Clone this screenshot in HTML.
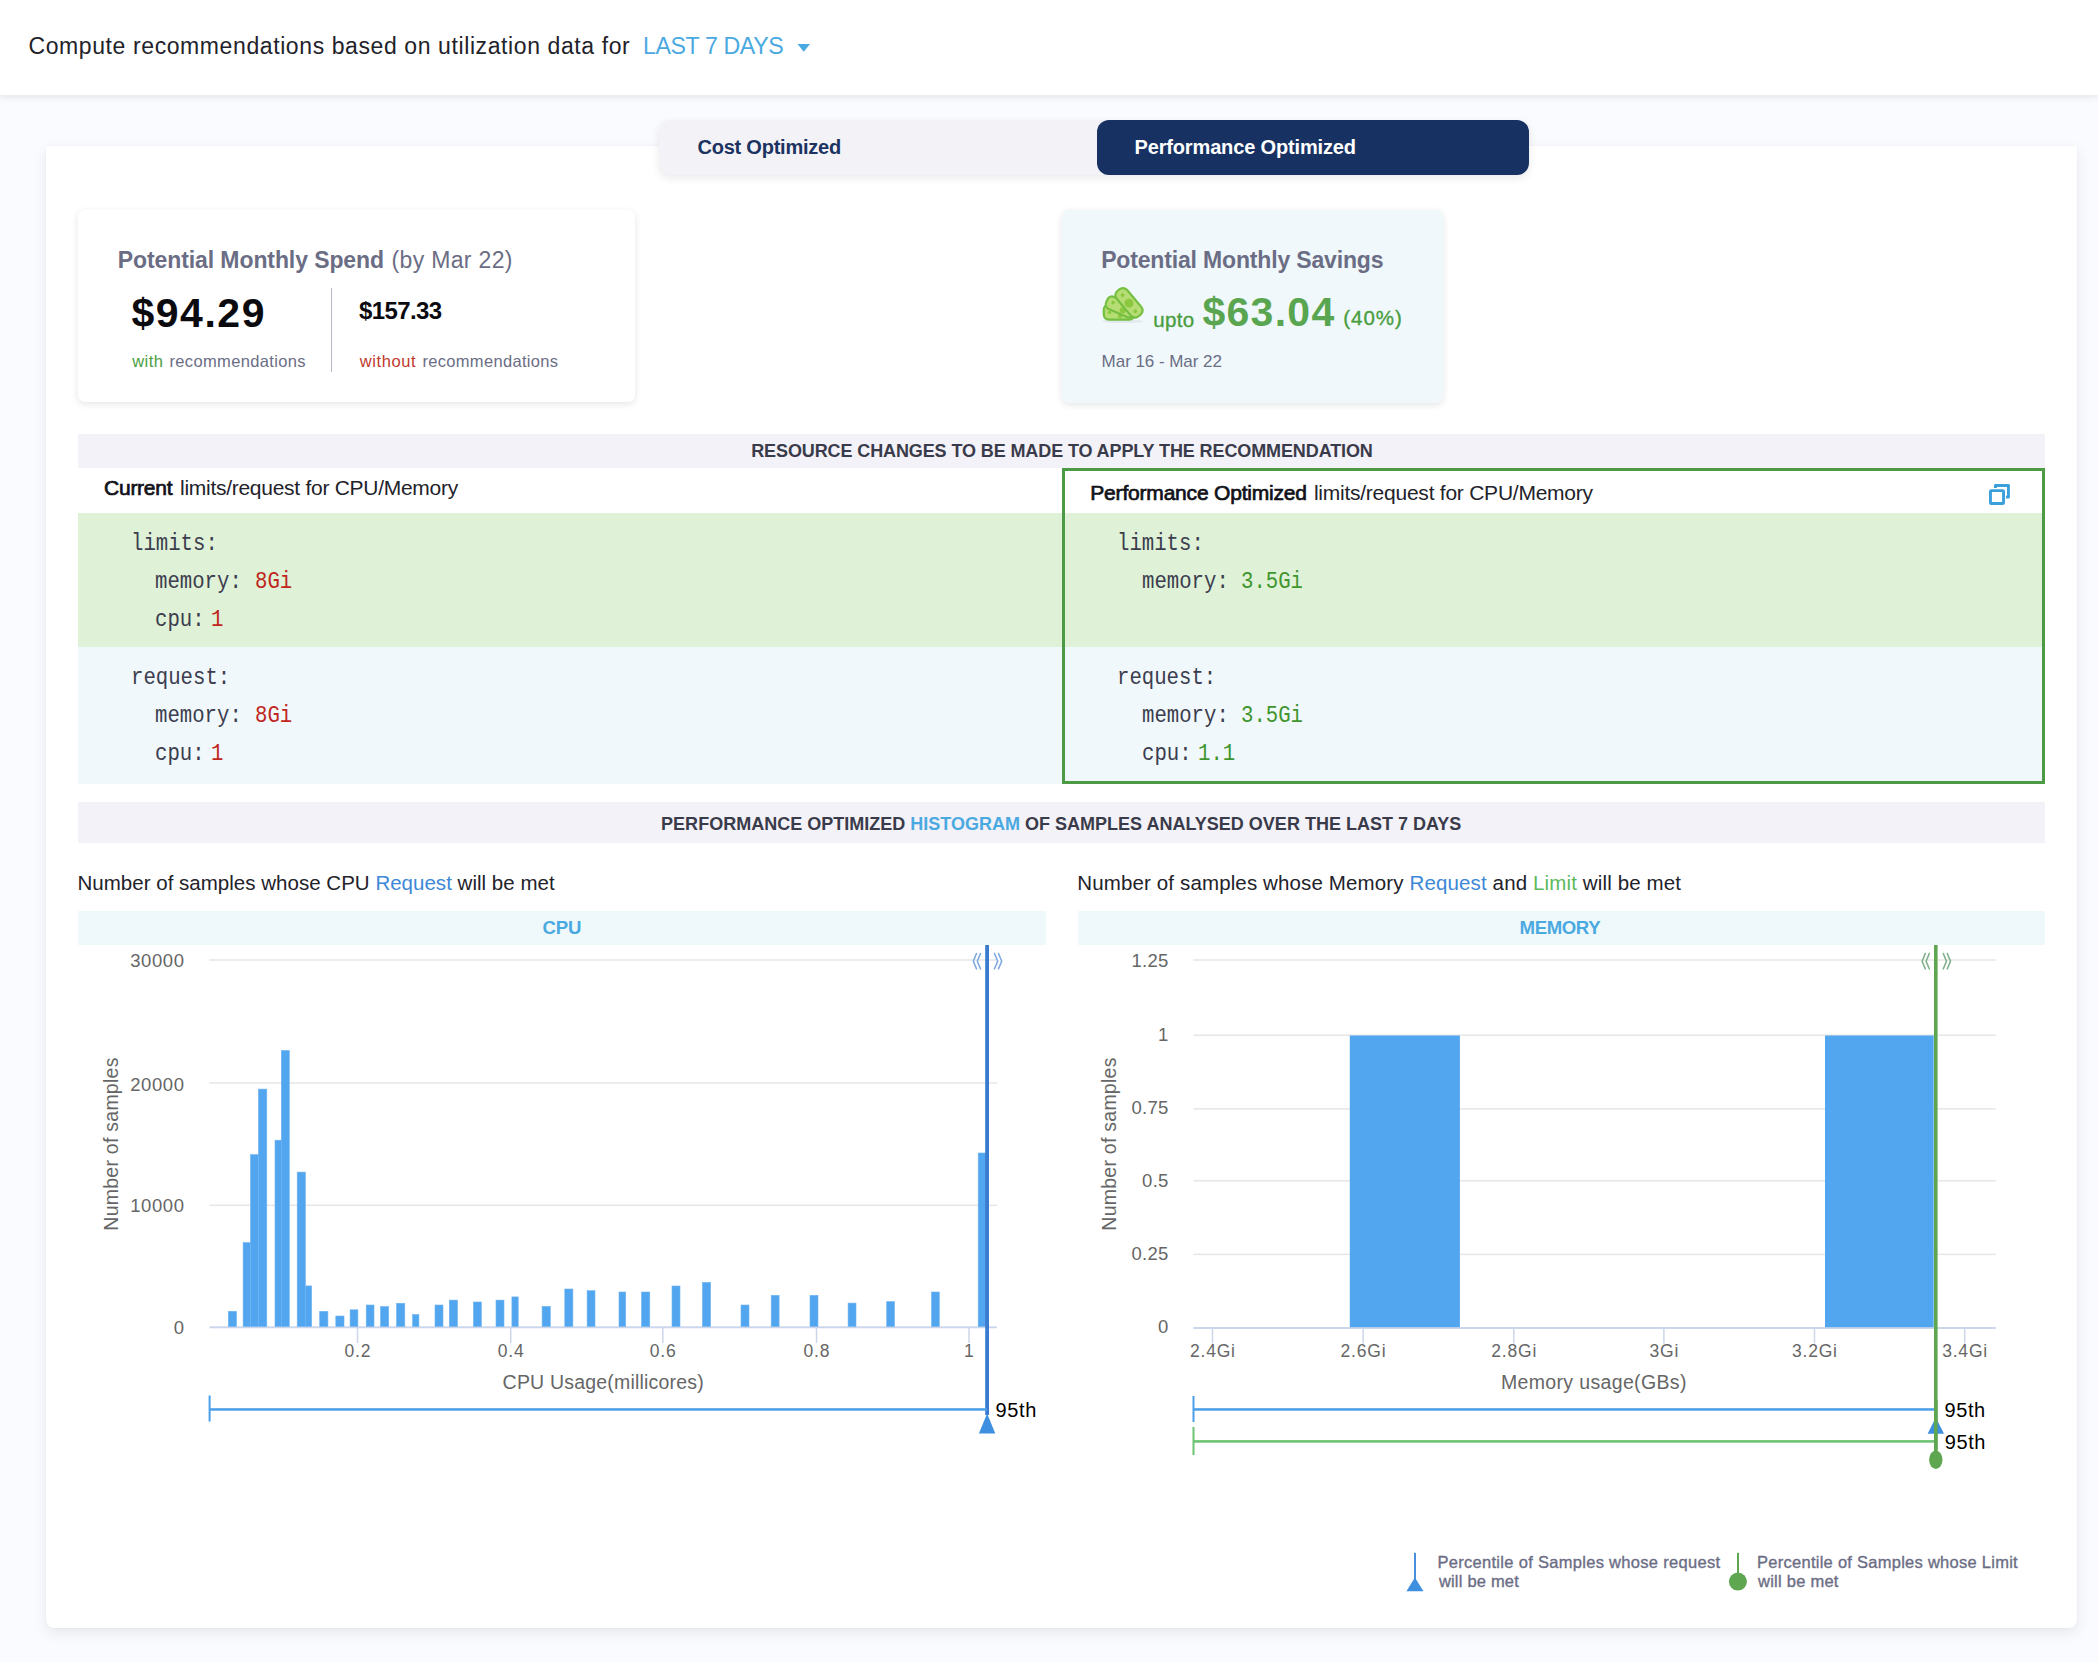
<!DOCTYPE html>
<html><head><meta charset="utf-8"><style>
html,body{margin:0;padding:0;width:2098px;height:1662px;overflow:hidden;background:#fafbfe;font-family:'Liberation Sans', sans-serif;}
.t{position:absolute;white-space:nowrap;}
</style></head><body>
<div style="position:absolute;left:0px;top:0px;width:2098px;height:95px;background:#fff;box-shadow:0 2px 7px rgba(40,41,61,0.11);z-index:2"></div>
<div id="t1" class="t" style="left:28.5px;top:34.53px;font-size:23px;line-height:23px;color:#22222a;font-weight:400;font-family:'Liberation Sans', sans-serif;letter-spacing:0.596px;z-index:3">Compute recommendations based on utilization data for</div>
<div id="t2" class="t" style="left:642.9px;top:34.56px;font-size:23.2px;line-height:23.2px;color:#4ba9e1;font-weight:400;font-family:'Liberation Sans', sans-serif;letter-spacing:-0.400px;z-index:3">LAST 7 DAYS</div>
<svg style="position:absolute;left:796px;top:42px;z-index:3" width="16" height="12" viewBox="0 0 16 12"><path d="M1.5 2 L14 2 L7.75 9.8 Z" fill="#4ba9e1"/></svg>
<div style="position:absolute;left:46px;top:145.5px;width:2031px;height:1482.5px;background:#fff;border-radius:0 0 8px 8px;box-shadow:0 5px 14px rgba(40,41,61,0.09), 0 0 2px rgba(40,41,61,0.05)"></div>
<div style="position:absolute;left:659px;top:120px;width:870px;height:55px;background:#f3f2f7;border-radius:12px;box-shadow:0 3px 8px rgba(40,41,61,0.10)"></div>
<div style="position:absolute;left:1097px;top:120px;width:432px;height:55px;background:#173262;border-radius:12px"></div>
<div id="t3" class="t" style="left:697.5px;top:137.37px;font-size:20px;line-height:20px;color:#1b3360;font-weight:700;font-family:'Liberation Sans', sans-serif;letter-spacing:-0.231px;">Cost Optimized</div>
<div id="t4" class="t" style="left:1134.5px;top:137.37px;font-size:20px;line-height:20px;color:#ffffff;font-weight:700;font-family:'Liberation Sans', sans-serif;letter-spacing:-0.150px;">Performance Optimized</div>
<div style="position:absolute;left:78px;top:210px;width:557px;height:192px;background:#fff;border-radius:7px;box-shadow:0 2px 7px rgba(40,41,61,0.12)"></div>
<div id="t5" class="t" style="left:117.8px;top:248.63px;font-size:23px;line-height:23px;color:#6b6d85;font-weight:700;font-family:'Liberation Sans', sans-serif;letter-spacing:-0.094px;">Potential Monthly Spend</div>
<div id="t6" class="t" style="left:391.5px;top:248.63px;font-size:23px;line-height:23px;color:#6b6d85;font-weight:400;font-family:'Liberation Sans', sans-serif;letter-spacing:0.340px;">(by Mar 22)</div>
<div id="t7" class="t" style="left:131.4px;top:292.89px;font-size:41px;line-height:41px;color:#0b0b0f;font-weight:700;font-family:'Liberation Sans', sans-serif;letter-spacing:1.533px;">$94.29</div>
<div id="t8" class="t" style="left:359.0px;top:298.68px;font-size:24px;line-height:24px;color:#0b0b0f;font-weight:700;font-family:'Liberation Sans', sans-serif;letter-spacing:-0.593px;">$157.33</div>
<div id="t9" class="t" style="left:132.3px;top:352.93px;font-size:16.5px;line-height:16.5px;color:#4a9e3f;font-weight:400;font-family:'Liberation Sans', sans-serif;letter-spacing:0.404px;">with</div>
<div id="t10" class="t" style="left:169.5px;top:352.93px;font-size:16.5px;line-height:16.5px;color:#6b6d85;font-weight:400;font-family:'Liberation Sans', sans-serif;letter-spacing:0.346px;">recommendations</div>
<div id="t11" class="t" style="left:359.8px;top:352.93px;font-size:16.5px;line-height:16.5px;color:#c0392b;font-weight:400;font-family:'Liberation Sans', sans-serif;letter-spacing:0.594px;">without</div>
<div id="t12" class="t" style="left:422.40000000000003px;top:352.93px;font-size:16.5px;line-height:16.5px;color:#6b6d85;font-weight:400;font-family:'Liberation Sans', sans-serif;letter-spacing:0.324px;">recommendations</div>
<div style="position:absolute;left:330.5px;top:288px;width:1.5px;height:84px;background:#b8b9c8"></div>
<div style="position:absolute;left:1062px;top:209.5px;width:381px;height:193px;background:#f0f8fc;border-radius:7px;box-shadow:0 2px 7px rgba(40,41,61,0.12)"></div>
<div id="t13" class="t" style="left:1101.2px;top:248.63px;font-size:23px;line-height:23px;color:#6b6d85;font-weight:700;font-family:'Liberation Sans', sans-serif;letter-spacing:-0.166px;">Potential Monthly Savings</div>
<div id="t14" class="t" style="left:1153.1999999999998px;top:309.64px;font-size:20.5px;line-height:20.5px;color:#4a9e3f;font-weight:400;font-family:'Liberation Sans', sans-serif;letter-spacing:0.329px;-webkit-text-stroke:0.35px currentColor">upto</div>
<div id="t15" class="t" style="left:1202.4px;top:292.39px;font-size:41px;line-height:41px;color:#5aa650;font-weight:700;font-family:'Liberation Sans', sans-serif;letter-spacing:1.289px;">$63.04</div>
<div id="t16" class="t" style="left:1343.2px;top:307.64px;font-size:20.5px;line-height:20.5px;color:#4a9e3f;font-weight:400;font-family:'Liberation Sans', sans-serif;letter-spacing:1.010px;-webkit-text-stroke:0.35px currentColor">(40%)</div>
<div id="t17" class="t" style="left:1101.6px;top:352.81px;font-size:17px;line-height:17px;color:#6b6d85;font-weight:400;font-family:'Liberation Sans', sans-serif;letter-spacing:-0.040px;">Mar 16 - Mar 22</div>
<svg style="position:absolute;left:1095px;top:280px;" width="60" height="50" viewBox="0 0 60 50">
<ellipse cx="27.5" cy="41.3" rx="20.5" ry="1.8" fill="rgba(60,60,80,0.08)"/>
<rect x="8.8" y="24.6" width="30.6" height="15" rx="5" fill="#b5dd74" stroke="#74bf40" stroke-width="2.2"/>
<circle cx="14.6" cy="32.5" r="1.8" fill="#8cc83f"/><circle cx="25" cy="36" r="2.2" fill="#8cc83f"/>
<g transform="translate(25.5 27) rotate(24)"><rect x="-15" y="-6.6" width="30" height="13.2" rx="5" fill="#b5dd74" stroke="#74bf40" stroke-width="2.2"/>
<circle cx="-8.5" cy="-1" r="1.8" fill="#8cc83f"/><circle cx="3.5" cy="2" r="3.2" fill="#8cc83f"/></g>
<g transform="translate(34 22.8) rotate(50)"><rect x="-16.5" y="-6.8" width="33" height="13.6" rx="5.5" fill="#b5dd74" stroke="#74bf40" stroke-width="2.2"/>
<circle cx="-10" cy="0" r="1.9" fill="#8cc83f"/><circle cx="0.3" cy="0.3" r="4.5" fill="#8cc83f"/><circle cx="10.5" cy="0.5" r="1.9" fill="#8cc83f"/></g>
</svg>
<div style="position:absolute;left:78px;top:434px;width:1967px;height:34px;background:#f3f2f8"></div>
<div id="t18" class="t" style="left:751.1999999999999px;top:442.06px;font-size:18px;line-height:18px;color:#3a3b4a;font-weight:700;font-family:'Liberation Sans', sans-serif;letter-spacing:-0.106px;">RESOURCE CHANGES TO BE MADE TO APPLY THE RECOMMENDATION</div>
<div id="t19" class="t" style="left:104.1px;top:477.12px;font-size:21px;line-height:21px;color:#111118;font-weight:400;font-family:'Liberation Sans', sans-serif;letter-spacing:-0.275px;-webkit-text-stroke:0.7px currentColor">Current</div>
<div id="t20" class="t" style="left:180.0px;top:477.12px;font-size:21px;line-height:21px;color:#22222a;font-weight:400;font-family:'Liberation Sans', sans-serif;letter-spacing:-0.274px;">limits/request for CPU/Memory</div>
<div style="position:absolute;left:78px;top:513px;width:985px;height:134px;background:#dff1d6"></div>
<div style="position:absolute;left:78px;top:647px;width:985px;height:137px;background:#f0f8fb"></div>
<div style="position:absolute;left:1062px;top:513px;width:983px;height:134px;background:#dff1d6"></div>
<div style="position:absolute;left:1062px;top:647px;width:983px;height:137px;background:#f0f8fb"></div>
<div style="position:absolute;left:1062px;top:468px;width:983px;height:316px;border:3px solid #4d9a45;box-sizing:border-box"></div>
<div id="t21" class="t" style="left:1090.3px;top:481.62px;font-size:21px;line-height:21px;color:#111118;font-weight:400;font-family:'Liberation Sans', sans-serif;letter-spacing:-0.193px;-webkit-text-stroke:0.7px currentColor">Performance Optimized</div>
<div id="t22" class="t" style="left:1313.8999999999999px;top:481.62px;font-size:21px;line-height:21px;color:#22222a;font-weight:400;font-family:'Liberation Sans', sans-serif;letter-spacing:-0.241px;">limits/request for CPU/Memory</div>
<svg style="position:absolute;left:1985px;top:480px;" width="30" height="30" viewBox="0 0 30 30"><g fill="none" stroke="#3a9fda" stroke-width="2.9" stroke-linejoin="round"><rect x="5.45" y="10.65" width="13.1" height="12.9" rx="0.8"/><path d="M10.45 7.9 V5.45 H23.45 V17.15 H21.0"/></g></svg>
<div class="t" style="left:130.50px;top:531.61px;font-size:24px;line-height:24px;color:#3c3d4e;font-family:'Liberation Mono', monospace;transform:scaleX(0.8611);transform-origin:0 0">limits:</div>
<div class="t" style="left:155.30px;top:569.61px;font-size:24px;line-height:24px;color:#3c3d4e;font-family:'Liberation Mono', monospace;transform:scaleX(0.8611);transform-origin:0 0">memory:</div>
<div class="t" style="left:254.50px;top:569.61px;font-size:24px;line-height:24px;color:#c0261d;font-family:'Liberation Mono', monospace;transform:scaleX(0.8611);transform-origin:0 0">8Gi</div>
<div class="t" style="left:155.30px;top:607.61px;font-size:24px;line-height:24px;color:#3c3d4e;font-family:'Liberation Mono', monospace;transform:scaleX(0.8611);transform-origin:0 0">cpu:</div>
<div class="t" style="left:211.10px;top:607.61px;font-size:24px;line-height:24px;color:#c0261d;font-family:'Liberation Mono', monospace;transform:scaleX(0.8611);transform-origin:0 0">1</div>
<div class="t" style="left:130.50px;top:666.01px;font-size:24px;line-height:24px;color:#3c3d4e;font-family:'Liberation Mono', monospace;transform:scaleX(0.8611);transform-origin:0 0">request:</div>
<div class="t" style="left:155.30px;top:704.01px;font-size:24px;line-height:24px;color:#3c3d4e;font-family:'Liberation Mono', monospace;transform:scaleX(0.8611);transform-origin:0 0">memory:</div>
<div class="t" style="left:254.50px;top:704.01px;font-size:24px;line-height:24px;color:#c0261d;font-family:'Liberation Mono', monospace;transform:scaleX(0.8611);transform-origin:0 0">8Gi</div>
<div class="t" style="left:155.30px;top:742.21px;font-size:24px;line-height:24px;color:#3c3d4e;font-family:'Liberation Mono', monospace;transform:scaleX(0.8611);transform-origin:0 0">cpu:</div>
<div class="t" style="left:211.10px;top:742.21px;font-size:24px;line-height:24px;color:#c0261d;font-family:'Liberation Mono', monospace;transform:scaleX(0.8611);transform-origin:0 0">1</div>
<div class="t" style="left:1117.00px;top:531.61px;font-size:24px;line-height:24px;color:#3c3d4e;font-family:'Liberation Mono', monospace;transform:scaleX(0.8611);transform-origin:0 0">limits:</div>
<div class="t" style="left:1141.80px;top:569.61px;font-size:24px;line-height:24px;color:#3c3d4e;font-family:'Liberation Mono', monospace;transform:scaleX(0.8611);transform-origin:0 0">memory:</div>
<div class="t" style="left:1241.00px;top:569.61px;font-size:24px;line-height:24px;color:#3f952e;font-family:'Liberation Mono', monospace;transform:scaleX(0.8611);transform-origin:0 0">3.5Gi</div>
<div class="t" style="left:1117.00px;top:666.01px;font-size:24px;line-height:24px;color:#3c3d4e;font-family:'Liberation Mono', monospace;transform:scaleX(0.8611);transform-origin:0 0">request:</div>
<div class="t" style="left:1141.80px;top:704.01px;font-size:24px;line-height:24px;color:#3c3d4e;font-family:'Liberation Mono', monospace;transform:scaleX(0.8611);transform-origin:0 0">memory:</div>
<div class="t" style="left:1241.00px;top:704.01px;font-size:24px;line-height:24px;color:#3f952e;font-family:'Liberation Mono', monospace;transform:scaleX(0.8611);transform-origin:0 0">3.5Gi</div>
<div class="t" style="left:1141.80px;top:742.21px;font-size:24px;line-height:24px;color:#3c3d4e;font-family:'Liberation Mono', monospace;transform:scaleX(0.8611);transform-origin:0 0">cpu:</div>
<div class="t" style="left:1197.60px;top:742.21px;font-size:24px;line-height:24px;color:#3f952e;font-family:'Liberation Mono', monospace;transform:scaleX(0.8611);transform-origin:0 0">1.1</div>
<div style="position:absolute;left:78px;top:802px;width:1967px;height:41px;background:#f3f2f8"></div>
<div id="t23" class="t" style="left:661.1px;top:815.46px;font-size:18px;line-height:18px;color:#3a3b4a;font-weight:700;font-family:'Liberation Sans', sans-serif;letter-spacing:0.007px;">PERFORMANCE OPTIMIZED <span style="color:#4ba9e1">HISTOGRAM</span> OF SAMPLES ANALYSED OVER THE LAST 7 DAYS</div>
<div id="t24" class="t" style="left:77.5px;top:872.84px;font-size:20.5px;line-height:20.5px;color:#22222a;font-weight:400;font-family:'Liberation Sans', sans-serif;letter-spacing:0.018px;">Number of samples whose CPU <span style="color:#3d88d6">Request</span> will be met</div>
<div id="t25" class="t" style="left:1077.3px;top:872.84px;font-size:20.5px;line-height:20.5px;color:#22222a;font-weight:400;font-family:'Liberation Sans', sans-serif;letter-spacing:0.132px;">Number of samples whose Memory <span style="color:#3d88d6">Request</span> and <span style="color:#5cb85c">Limit</span> will be met</div>
<div style="position:absolute;left:78px;top:911px;width:968px;height:34px;background:#eff9fc"></div>
<div style="position:absolute;left:1078px;top:911px;width:967px;height:34px;background:#eff9fc"></div>
<div id="t26" class="t" style="left:542.6px;top:918.95px;font-size:18.6px;line-height:18.6px;color:#4ba9e1;font-weight:700;font-family:'Liberation Sans', sans-serif;letter-spacing:-0.200px;">CPU</div>
<div id="t27" class="t" style="left:1519.6000000000001px;top:918.95px;font-size:18.6px;line-height:18.6px;color:#4ba9e1;font-weight:700;font-family:'Liberation Sans', sans-serif;letter-spacing:-0.400px;">MEMORY</div>
<svg style="position:absolute;left:0;top:0" width="2098" height="1662" viewBox="0 0 2098 1662"><rect x="209.4" y="959.25" width="787.5" height="1.5" fill="#e6e6e6"/><rect x="209.4" y="1082.25" width="787.5" height="1.5" fill="#e6e6e6"/><rect x="209.4" y="1204.55" width="787.5" height="1.5" fill="#e6e6e6"/><rect x="209.4" y="1326.3" width="787.5" height="2" fill="#ccd6eb"/><rect x="356.75" y="1328" width="1.5" height="15" fill="#ccd6eb"/><rect x="509.95" y="1328" width="1.5" height="15" fill="#ccd6eb"/><rect x="662.05" y="1328" width="1.5" height="15" fill="#ccd6eb"/><rect x="815.75" y="1328" width="1.5" height="15" fill="#ccd6eb"/><rect x="968.25" y="1328" width="1.5" height="15" fill="#ccd6eb"/><rect x="228.30" y="1311.30" width="8.20" height="15.20" fill="#52a5ef" stroke="#6fb4f1" stroke-width="0.6"/><rect x="243.10" y="1242.60" width="7.40" height="83.90" fill="#52a5ef" stroke="#6fb4f1" stroke-width="0.6"/><rect x="250.50" y="1154.60" width="7.90" height="171.90" fill="#52a5ef" stroke="#6fb4f1" stroke-width="0.6"/><rect x="258.40" y="1089.10" width="8.40" height="237.40" fill="#52a5ef" stroke="#6fb4f1" stroke-width="0.6"/><rect x="275.00" y="1140.20" width="6.30" height="186.30" fill="#52a5ef" stroke="#6fb4f1" stroke-width="0.6"/><rect x="281.30" y="1050.50" width="8.00" height="276.00" fill="#52a5ef" stroke="#6fb4f1" stroke-width="0.6"/><rect x="297.20" y="1172.10" width="8.20" height="154.40" fill="#52a5ef" stroke="#6fb4f1" stroke-width="0.6"/><rect x="305.40" y="1285.90" width="6.30" height="40.60" fill="#52a5ef" stroke="#6fb4f1" stroke-width="0.6"/><rect x="319.70" y="1311.30" width="8.20" height="15.20" fill="#52a5ef" stroke="#6fb4f1" stroke-width="0.6"/><rect x="335.80" y="1316.00" width="8.20" height="10.50" fill="#52a5ef" stroke="#6fb4f1" stroke-width="0.6"/><rect x="350.10" y="1309.80" width="7.80" height="16.70" fill="#52a5ef" stroke="#6fb4f1" stroke-width="0.6"/><rect x="366.20" y="1305.00" width="7.80" height="21.50" fill="#52a5ef" stroke="#6fb4f1" stroke-width="0.6"/><rect x="380.50" y="1306.60" width="8.20" height="19.90" fill="#52a5ef" stroke="#6fb4f1" stroke-width="0.6"/><rect x="396.50" y="1303.30" width="8.30" height="23.20" fill="#52a5ef" stroke="#6fb4f1" stroke-width="0.6"/><rect x="412.60" y="1314.60" width="6.30" height="11.90" fill="#52a5ef" stroke="#6fb4f1" stroke-width="0.6"/><rect x="435.00" y="1305.00" width="8.00" height="21.50" fill="#52a5ef" stroke="#6fb4f1" stroke-width="0.6"/><rect x="449.30" y="1300.10" width="8.20" height="26.40" fill="#52a5ef" stroke="#6fb4f1" stroke-width="0.6"/><rect x="473.40" y="1302.00" width="8.00" height="24.50" fill="#52a5ef" stroke="#6fb4f1" stroke-width="0.6"/><rect x="496.00" y="1300.10" width="8.00" height="26.40" fill="#52a5ef" stroke="#6fb4f1" stroke-width="0.6"/><rect x="511.90" y="1296.90" width="6.30" height="29.60" fill="#52a5ef" stroke="#6fb4f1" stroke-width="0.6"/><rect x="542.10" y="1306.40" width="8.20" height="20.10" fill="#52a5ef" stroke="#6fb4f1" stroke-width="0.6"/><rect x="564.80" y="1289.00" width="8.10" height="37.50" fill="#52a5ef" stroke="#6fb4f1" stroke-width="0.6"/><rect x="587.10" y="1290.70" width="7.90" height="35.80" fill="#52a5ef" stroke="#6fb4f1" stroke-width="0.6"/><rect x="619.00" y="1292.00" width="6.70" height="34.50" fill="#52a5ef" stroke="#6fb4f1" stroke-width="0.6"/><rect x="641.50" y="1292.00" width="8.30" height="34.50" fill="#52a5ef" stroke="#6fb4f1" stroke-width="0.6"/><rect x="672.00" y="1286.00" width="8.00" height="40.50" fill="#52a5ef" stroke="#6fb4f1" stroke-width="0.6"/><rect x="702.40" y="1282.40" width="8.20" height="44.10" fill="#52a5ef" stroke="#6fb4f1" stroke-width="0.6"/><rect x="741.00" y="1305.00" width="8.00" height="21.50" fill="#52a5ef" stroke="#6fb4f1" stroke-width="0.6"/><rect x="771.20" y="1295.30" width="7.90" height="31.20" fill="#52a5ef" stroke="#6fb4f1" stroke-width="0.6"/><rect x="810.00" y="1295.30" width="8.00" height="31.20" fill="#52a5ef" stroke="#6fb4f1" stroke-width="0.6"/><rect x="848.10" y="1303.10" width="7.90" height="23.40" fill="#52a5ef" stroke="#6fb4f1" stroke-width="0.6"/><rect x="886.70" y="1301.60" width="7.80" height="24.90" fill="#52a5ef" stroke="#6fb4f1" stroke-width="0.6"/><rect x="931.50" y="1292.00" width="7.80" height="34.50" fill="#52a5ef" stroke="#6fb4f1" stroke-width="0.6"/><rect x="978.20" y="1153.00" width="8.40" height="173.50" fill="#52a5ef" stroke="#6fb4f1" stroke-width="0.6"/><rect x="985.2" y="945" width="3.8" height="470" fill="#3a7bd0"/><g fill="none" stroke="#7eaae0" stroke-width="1.6" stroke-linecap="round" stroke-linejoin="round"><path d="M976.5 953.5 L973.3 961.2 L976.5 968.8 M980.5 953.5 L977.3 961.2 L980.5 968.8 M994.5 953.5 L997.7 961.2 L994.5 968.8 M998.5 953.5 L1001.7 961.2 L998.5 968.8"/></g><rect x="209.4" y="1408.2" width="777.6" height="2.5" fill="#4a9fe8"/><rect x="208.6" y="1395.5" width="2" height="26" fill="#4a9fe8"/><path d="M987.1 1413.5 L995.3 1433.5 L978.9 1433.5 Z" fill="#3f8fe0"/><rect x="1193.5" y="959.25" width="802.2" height="1.5" fill="#e6e6e6"/><rect x="1193.5" y="1034.45" width="802.2" height="1.5" fill="#e6e6e6"/><rect x="1193.5" y="1108.15" width="802.2" height="1.5" fill="#e6e6e6"/><rect x="1193.5" y="1180.05" width="802.2" height="1.5" fill="#e6e6e6"/><rect x="1193.5" y="1253.65" width="802.2" height="1.5" fill="#e6e6e6"/><rect x="1193.5" y="1327" width="802.2" height="2" fill="#ccd6eb"/><rect x="1211.75" y="1328.5" width="1.5" height="15" fill="#ccd6eb"/><rect x="1362.35" y="1328.5" width="1.5" height="15" fill="#ccd6eb"/><rect x="1513.05" y="1328.5" width="1.5" height="15" fill="#ccd6eb"/><rect x="1663.15" y="1328.5" width="1.5" height="15" fill="#ccd6eb"/><rect x="1813.75" y="1328.5" width="1.5" height="15" fill="#ccd6eb"/><rect x="1963.95" y="1328.5" width="1.5" height="15" fill="#ccd6eb"/><rect x="1349.8" y="1035.5" width="110.10" height="291.70" fill="#52a5ef"/><rect x="1825" y="1035.5" width="108.70" height="291.70" fill="#52a5ef"/><rect x="1934" y="945" width="3.6" height="515" fill="#5ea650"/><g fill="none" stroke="#7fb08a" stroke-width="1.6" stroke-linecap="round" stroke-linejoin="round"><path d="M1925.3 953.5 L1922.1 961.2 L1925.3 968.8 M1929.3 953.5 L1926.1 961.2 L1929.3 968.8 M1943.3 953.5 L1946.5 961.2 L1943.3 968.8 M1947.3 953.5 L1950.5 961.2 L1947.3 968.8"/></g><rect x="1193.5" y="1408.2" width="741" height="2.5" fill="#4a9fe8"/><rect x="1192.5" y="1396" width="2" height="26" fill="#4a9fe8"/><rect x="1193.5" y="1440.1" width="741" height="2.6" fill="#6dc473"/><rect x="1192.5" y="1427" width="2" height="28" fill="#6dc473"/><path d="M1935.8 1417.6 L1944 1433.7 L1927.6 1433.7 Z" fill="#3f8fe0"/><rect x="1934" y="1400" width="3.6" height="50" fill="#5ea650"/><ellipse cx="1935.8" cy="1459.8" rx="6.7" ry="9.2" fill="#5ea650"/><rect x="1414" y="1552.8" width="2" height="30" fill="#4a8fdc"/><path d="M1414.9 1577.5 L1423.5 1591.2 L1406.4 1591.2 Z" fill="#3f8fe0"/><rect x="1737" y="1552.8" width="2" height="25" fill="#5ea650"/><circle cx="1737.9" cy="1581.6" r="9" fill="#5ea650"/></svg>
<div id="t28" class="t" style="right:1913.4px;top:951.94px;font-size:18.5px;line-height:18.5px;color:#666666;font-weight:400;font-family:'Liberation Sans', sans-serif;letter-spacing:0.000px;letter-spacing:0.6px">30000</div>
<div id="t29" class="t" style="right:1913.4px;top:1075.94px;font-size:18.5px;line-height:18.5px;color:#666666;font-weight:400;font-family:'Liberation Sans', sans-serif;letter-spacing:0.000px;letter-spacing:0.6px">20000</div>
<div id="t30" class="t" style="right:1913.4px;top:1197.14px;font-size:18.5px;line-height:18.5px;color:#666666;font-weight:400;font-family:'Liberation Sans', sans-serif;letter-spacing:0.000px;letter-spacing:0.6px">10000</div>
<div id="t31" class="t" style="right:1913.4px;top:1318.94px;font-size:18.5px;line-height:18.5px;color:#666666;font-weight:400;font-family:'Liberation Sans', sans-serif;letter-spacing:0.000px;letter-spacing:0.6px">0</div>
<div id="t32" class="t" style="left:357.9px;transform:translateX(-50%);top:1343.08px;font-size:17.5px;line-height:17.5px;color:#666666;font-weight:400;font-family:'Liberation Sans', sans-serif;letter-spacing:0.000px;letter-spacing:0.8px">0.2</div>
<div id="t33" class="t" style="left:511.09999999999997px;transform:translateX(-50%);top:1343.08px;font-size:17.5px;line-height:17.5px;color:#666666;font-weight:400;font-family:'Liberation Sans', sans-serif;letter-spacing:0.000px;letter-spacing:0.8px">0.4</div>
<div id="t34" class="t" style="left:663.1999999999999px;transform:translateX(-50%);top:1343.08px;font-size:17.5px;line-height:17.5px;color:#666666;font-weight:400;font-family:'Liberation Sans', sans-serif;letter-spacing:0.000px;letter-spacing:0.8px">0.6</div>
<div id="t35" class="t" style="left:816.9px;transform:translateX(-50%);top:1343.08px;font-size:17.5px;line-height:17.5px;color:#666666;font-weight:400;font-family:'Liberation Sans', sans-serif;letter-spacing:0.000px;letter-spacing:0.8px">0.8</div>
<div id="t36" class="t" style="left:969.4px;transform:translateX(-50%);top:1343.08px;font-size:17.5px;line-height:17.5px;color:#666666;font-weight:400;font-family:'Liberation Sans', sans-serif;letter-spacing:0.000px;letter-spacing:0.8px">1</div>
<div id="t37" class="t" style="left:502.59999999999997px;top:1372.59px;font-size:19.5px;line-height:19.5px;color:#666666;font-weight:400;font-family:'Liberation Sans', sans-serif;letter-spacing:0.200px;">CPU Usage(millicores)</div>
<div id="t38" class="t" style="left:995.4px;top:1399.97px;font-size:20px;line-height:20px;color:#000;font-weight:400;font-family:'Liberation Sans', sans-serif;letter-spacing:0.667px;">95th</div>
<div id="t39" class="t" style="right:929.3px;top:951.74px;font-size:18.5px;line-height:18.5px;color:#666666;font-weight:400;font-family:'Liberation Sans', sans-serif;letter-spacing:0.000px;letter-spacing:0.3px">1.25</div>
<div id="t40" class="t" style="right:929.3px;top:1025.54px;font-size:18.5px;line-height:18.5px;color:#666666;font-weight:400;font-family:'Liberation Sans', sans-serif;letter-spacing:0.000px;letter-spacing:0.3px">1</div>
<div id="t41" class="t" style="right:929.3px;top:1099.34px;font-size:18.5px;line-height:18.5px;color:#666666;font-weight:400;font-family:'Liberation Sans', sans-serif;letter-spacing:0.000px;letter-spacing:0.3px">0.75</div>
<div id="t42" class="t" style="right:929.3px;top:1172.24px;font-size:18.5px;line-height:18.5px;color:#666666;font-weight:400;font-family:'Liberation Sans', sans-serif;letter-spacing:0.000px;letter-spacing:0.3px">0.5</div>
<div id="t43" class="t" style="right:929.3px;top:1245.34px;font-size:18.5px;line-height:18.5px;color:#666666;font-weight:400;font-family:'Liberation Sans', sans-serif;letter-spacing:0.000px;letter-spacing:0.3px">0.25</div>
<div id="t44" class="t" style="right:929.3px;top:1318.14px;font-size:18.5px;line-height:18.5px;color:#666666;font-weight:400;font-family:'Liberation Sans', sans-serif;letter-spacing:0.000px;letter-spacing:0.3px">0</div>
<div id="t45" class="t" style="left:1212.9px;transform:translateX(-50%);top:1343.08px;font-size:17.5px;line-height:17.5px;color:#666666;font-weight:400;font-family:'Liberation Sans', sans-serif;letter-spacing:0.000px;letter-spacing:0.8px">2.4Gi</div>
<div id="t46" class="t" style="left:1363.5px;transform:translateX(-50%);top:1343.08px;font-size:17.5px;line-height:17.5px;color:#666666;font-weight:400;font-family:'Liberation Sans', sans-serif;letter-spacing:0.000px;letter-spacing:0.8px">2.6Gi</div>
<div id="t47" class="t" style="left:1514.2px;transform:translateX(-50%);top:1343.08px;font-size:17.5px;line-height:17.5px;color:#666666;font-weight:400;font-family:'Liberation Sans', sans-serif;letter-spacing:0.000px;letter-spacing:0.8px">2.8Gi</div>
<div id="t48" class="t" style="left:1664.3000000000002px;transform:translateX(-50%);top:1343.08px;font-size:17.5px;line-height:17.5px;color:#666666;font-weight:400;font-family:'Liberation Sans', sans-serif;letter-spacing:0.000px;letter-spacing:0.8px">3Gi</div>
<div id="t49" class="t" style="left:1814.9px;transform:translateX(-50%);top:1343.08px;font-size:17.5px;line-height:17.5px;color:#666666;font-weight:400;font-family:'Liberation Sans', sans-serif;letter-spacing:0.000px;letter-spacing:0.8px">3.2Gi</div>
<div id="t50" class="t" style="left:1965.1000000000001px;transform:translateX(-50%);top:1343.08px;font-size:17.5px;line-height:17.5px;color:#666666;font-weight:400;font-family:'Liberation Sans', sans-serif;letter-spacing:0.000px;letter-spacing:0.8px">3.4Gi</div>
<div id="t51" class="t" style="left:1500.8999999999999px;top:1372.59px;font-size:19.5px;line-height:19.5px;color:#666666;font-weight:400;font-family:'Liberation Sans', sans-serif;letter-spacing:0.354px;">Memory usage(GBs)</div>
<div id="t52" class="t" style="left:1944.3999999999999px;top:1399.97px;font-size:20px;line-height:20px;color:#000;font-weight:400;font-family:'Liberation Sans', sans-serif;letter-spacing:0.642px;">95th</div>
<div id="t53" class="t" style="left:1944.8px;top:1431.87px;font-size:20px;line-height:20px;color:#000;font-weight:400;font-family:'Liberation Sans', sans-serif;letter-spacing:0.580px;">95th</div>
<div class="t" style="left:10.5px;top:1132.7px;width:200px;height:22px;line-height:22px;text-align:center;font-size:19.5px;color:#666666;transform:rotate(-90deg);letter-spacing:0.25px">Number of samples</div>
<div class="t" style="left:1009.3px;top:1132.7px;width:200px;height:22px;line-height:22px;text-align:center;font-size:19.5px;color:#666666;transform:rotate(-90deg);letter-spacing:0.25px">Number of samples</div>
<div id="t54" class="t" style="left:1437.3999999999999px;top:1554.23px;font-size:16.5px;line-height:16.5px;color:#6b6d85;font-weight:400;font-family:'Liberation Sans', sans-serif;letter-spacing:0.302px;-webkit-text-stroke:0.35px currentColor">Percentile of Samples whose request</div>
<div id="t55" class="t" style="left:1438.8999999999999px;top:1573.33px;font-size:16.5px;line-height:16.5px;color:#6b6d85;font-weight:400;font-family:'Liberation Sans', sans-serif;letter-spacing:0.200px;-webkit-text-stroke:0.35px currentColor">will be met</div>
<div id="t56" class="t" style="left:1757.0px;top:1554.23px;font-size:16.5px;line-height:16.5px;color:#6b6d85;font-weight:400;font-family:'Liberation Sans', sans-serif;letter-spacing:0.266px;-webkit-text-stroke:0.35px currentColor">Percentile of Samples whose Limit</div>
<div id="t57" class="t" style="left:1758.0px;top:1573.33px;font-size:16.5px;line-height:16.5px;color:#6b6d85;font-weight:400;font-family:'Liberation Sans', sans-serif;letter-spacing:0.250px;-webkit-text-stroke:0.35px currentColor">will be met</div>
</body></html>
